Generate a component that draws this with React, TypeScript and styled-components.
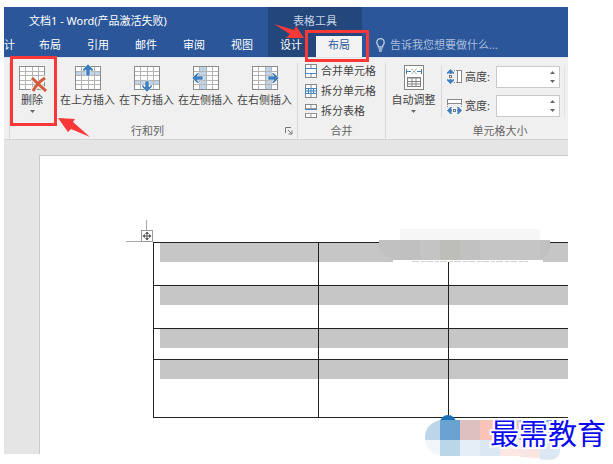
import React from "react";
import styled, { createGlobalStyle } from "styled-components";

const GlobalStyle = createGlobalStyle`
  * { box-sizing: border-box; }
  body {
    margin: 0;
    background: #fff;
    font-family: "Noto Sans", "Noto Sans CJK SC", sans-serif;
    font-size: 11px;
    line-height: 16px;
    color: #444;
  }
  button, input { font: inherit; color: inherit; }
`;

const Screen = styled.main`
  position: relative;
  display: flex;
  min-height: 100vh;
  padding: 7px 45px 10px 4px;
  overflow: hidden;
`;

const Window = styled.section`
  flex: 1;
  min-width: 0;
  display: flex;
  flex-direction: column;
  overflow: hidden;
  background: #e5e5e5;
`;

const Header = styled.header`
  display: flex;
  height: 50px;
  background: #2b579a;
  color: #fff;
`;

const HeaderColumn = styled.div<{ $dark?: boolean; $width?: number }>`
  flex: ${(p) => (p.$width ? `0 0 ${p.$width}px` : "1")};
  min-width: 0;
  display: grid;
  grid-template-columns: minmax(0, 1fr);
  grid-template-rows: 26px 24px;
  overflow: hidden;
  background: ${(p) => (p.$dark ? "#24477b" : "transparent")};
`;

const Title = styled.h1`
  margin: 0;
  padding: 6px 0 0 25px;
  font-size: 11px;
  font-weight: 400;
  line-height: 16px;
  white-space: nowrap;
`;

const ContextTitle = styled.div`
  padding-top: 6px;
  text-align: center;
  color: #c5d2e6;
`;

const TabRow = styled.nav`
  display: flex;
  justify-content: space-between;
  align-items: flex-end;
`;

const Tab = styled.button<{ $active?: boolean; $width?: number }>`
  flex: 0 0 ${(p) => p.$width ?? 48}px;
  height: 21px;
  padding: 0 0 3px;
  border: 0;
  line-height: 18px;
  white-space: nowrap;
  background: ${(p) => (p.$active ? "#f3f3f3" : "transparent")};
  color: ${(p) => (p.$active ? "#2b579a" : "#fff")};
`;

const MainTabRow = styled(TabRow)`
  justify-content: flex-start;

  ${Tab}:first-child {
    text-align: left;
  }
`;

const TellMe = styled.button`
  grid-row: 2;
  display: flex;
  align-items: center;
  gap: 5px;
  padding: 0 0 0 14px;
  border: 0;
  background: transparent;
  color: #a9bddb;
  white-space: nowrap;
`;

const Ribbon = styled.div`
  display: flex;
  height: 83px;
  padding: 5px 0 0 5px;
  overflow: hidden;
  background: #f0f0f0;
  border-top: 1px solid #dfe5ee;
  border-bottom: 1px solid #d4d4d4;
`;

const Group = styled.section<{ $width: number }>`
  flex: 0 0 ${(p) => p.$width}px;
  display: grid;
  grid-template-rows: minmax(0, 1fr) 16px;
  border-left: 1px solid #d8d8d8;
`;

const GroupBody = styled.div`
  display: flex;
`;

const GroupFooter = styled.div<{ $launcher?: boolean }>`
  display: grid;
  grid-template-columns: ${(p) => (p.$launcher ? "1fr 12px" : "1fr")};
  align-items: center;
  text-align: center;
  color: #666;
`;

const Launcher = styled.button`
  display: flex;
  padding: 0;
  border: 0;
  background: none;
`;

const BigButton = styled.button<{ $width: number }>`
  flex: 0 0 ${(p) => p.$width}px;
  display: flex;
  flex-direction: column;
  align-items: center;
  padding: 1px 0 0;
  border: 0;
  background: none;
  white-space: nowrap;
`;

const InsertButtons = styled.div`
  display: flex;
  padding-left: 4px;
`;

const ButtonLabel = styled.span`
  line-height: 16px;
`;

const Stack = styled.div`
  display: flex;
  flex-direction: column;
  margin-top: -2px;
  padding-left: 7px;
`;

const SmallButton = styled.button`
  display: flex;
  align-items: center;
  gap: 4px;
  height: 20px;
  padding: 0;
  border: 0;
  background: none;
  white-space: nowrap;
`;

const Fields = styled.div`
  display: flex;
  flex-direction: column;
  gap: 7px;
  height: 51px;
  margin-top: 3px;
  padding-left: 5px;
  border-left: 1px solid #d8d8d8;
`;

const FieldRow = styled.label`
  display: grid;
  grid-template-columns: 18px 31px 64px;
  align-items: center;
  height: 22px;
`;

const Divider = styled.span`
  height: 51px;
  margin: 3px 0 0 4px;
  border-left: 1px solid #e2e2e2;
`;

const Spin = styled.span`
  display: flex;
  align-items: center;
  height: 22px;
  padding-right: 4px;
  background: #fff;
  border: 1px solid #c9c9c9;
`;

const SpinInput = styled.input`
  flex: 1;
  min-width: 0;
  height: 18px;
  padding: 0 2px;
  border: 0;
  outline: 0;
  background: transparent;
`;

const Canvas = styled.div`
  flex: 1;
  display: flex;
  padding: 15px 0 0 35px;
`;

const Paper = styled.article`
  flex: 1;
  min-width: 0;
  padding: 86px 0 0 113px;
  background: #fff;
  border-top: 1px solid #cacaca;
  border-left: 1px solid #cacaca;
`;

const DocTable = styled.table`
  width: 100%;
  table-layout: fixed;
  border-collapse: collapse;
  border-left: 1px solid #555;
`;

const Cell = styled.td<{ $height: number }>`
  height: ${(p) => p.$height}px;
  padding: 0;
  vertical-align: top;
  border: 1px solid #222;
  border-right: 0;
`;

const Selection = styled.div<{ $first: boolean }>`
  height: 19px;
  margin-left: ${(p) => (p.$first ? 6 : 0)}px;
  background: #c6c6c6;
`;

const Overlay = styled.svg`
  position: absolute;
  left: 0;
  top: 0;
  pointer-events: none;
`;

const Brand = styled.div`
  position: absolute;
  left: 490px;
  top: 413px;
  font-family: "Noto Sans CJK SC", sans-serif;
  font-size: 29px;
  line-height: 38px;
  color: #0a0af0;
  white-space: nowrap;
  text-shadow: 2px 0 #fff, -2px 0 #fff, 0 2px #fff, 0 -2px #fff,
    2px 2px #fff, -2px -2px #fff, 2px -2px #fff, -2px 2px #fff;
`;

type GridKind = "delete" | "above" | "below" | "left" | "right";

const GridIcon = ({ kind }: { kind: GridKind }) => (
  <svg width="30" height="28" viewBox="0 0 30 28">
    <rect x="2.5" y="2.5" width="25" height="23" fill="#fff" />
    {kind === "above" && <rect x="3" y="7" width="24" height="4" fill="#bfd3e8" />}
    {kind === "below" && <rect x="3" y="16" width="24" height="5" fill="#bfd3e8" />}
    {kind === "left" && <rect x="9" y="3" width="6" height="22" fill="#bfd3e8" />}
    {kind === "right" && <rect x="15" y="3" width="7" height="22" fill="#bfd3e8" />}
    <path
      d="M3 7.5H27M3 11.5H27M3 16.5H27M3 20.5H27M8.5 3V25M15.5 3V25M21.5 3V25"
      stroke="#b4b4b4"
      fill="none"
    />
    <rect x="2.5" y="2.5" width="25" height="23" fill="none" stroke="#8c8c8c" />
    {kind === "delete" && (
      <>
        <path d="M15 14L29 27M29 13L15 27" stroke="#f0f0f0" strokeWidth="5" />
        <path d="M15 14Q21 20 29 27M28 14Q20 19 16 27" stroke="#d35a3a" strokeWidth="3" fill="none" />
      </>
    )}
    {kind === "above" && (
      <path d="M15 0L20 5V8L17 6V12H13V6L10 8V5Z" fill="#3f7fbd" stroke="#fff" strokeWidth=".5" />
    )}
    {kind === "below" && (
      <path d="M13 17H17V23L20 20V23L15 28L10 23V20L13 23Z" fill="#3f7fbd" stroke="#fff" strokeWidth=".5" />
    )}
    {kind === "left" && (
      <path d="M1 14L6 9H9L6 12H12V16H6L9 19H6Z" fill="#3f7fbd" stroke="#fff" strokeWidth=".5" />
    )}
    {kind === "right" && (
      <path d="M29 14L24 9H21L24 12H18V16H24L21 19H24Z" fill="#3f7fbd" stroke="#fff" strokeWidth=".5" />
    )}
  </svg>
);

type MergeKind = "merge" | "splitCell" | "splitTable";

const MergeIcon = ({ kind }: { kind: MergeKind }) => (
  <svg width="12" height="14" viewBox="0 0 12 14">
    <rect x=".5" y=".5" width="11" height="13" fill="#fff" stroke="#888" />
    {kind !== "splitTable" ? (
      <>
        <path d="M6 1V4M6 10V13" stroke="#888" />
        <rect x=".5" y="4.5" width="11" height="5" fill="#fff" stroke="#4a86bf" />
        {kind === "splitCell" && (
          <path d="M1 7H11M3.5 5V9M6 5V9M8.5 5V9" stroke="#3f7fbd" />
        )}
      </>
    ) : (
      <>
        <path d="M6 1V13M1 4.5H11M1 9.5H11" stroke="#999" />
        <rect x="0" y="5" width="12" height="4" fill="#f0f0f0" />
        <path d="M0 5.5H12" stroke="#4a86bf" />
      </>
    )}
  </svg>
);

const AutoFitIcon = () => (
  <svg width="22" height="28" viewBox="0 0 22 28">
    <rect x="1.5" y="1.5" width="19" height="24" fill="#fff" stroke="#858585" />
    <path d="M3.5 5V10M18.5 5V10M4 7.5H8M14 7.5H18" stroke="#3f7fbd" />
    <path d="M8.5 5L13.5 10M13.5 5L8.5 10" stroke="#777" strokeDasharray="2 1" />
    <rect x="4.5" y="13.5" width="13" height="9" fill="#fff" stroke="#808080" />
    <path d="M4 14H18M5 17.5H17M5 20H17M9 14V22M13 14V22" stroke="#858585" />
  </svg>
);

const HeightIcon = () => (
  <svg width="16" height="16" viewBox="0 0 16 16">
    <path d="M3.5 0L7 3.500V5L4.500 4V5H2.500V4L0 5V3.500ZM3.500 15L7 11.500V10L4.500 11V10H2.500V11L0 10V11.500Z" fill="#3f7fbd" />
    <rect x="2.5" y="6.5" width="2" height="2" fill="#fff" stroke="#777" />
    <path d="M7 1.5H10M7 13.5H10" stroke="#888" strokeDasharray="1 1" />
    <rect x="10.5" y="1.5" width="4" height="12" fill="#fff" stroke="#888" />
  </svg>
);

const WidthIcon = () => (
  <svg width="16" height="16" viewBox="0 0 16 16">
    <rect x=".5" y="1.5" width="14" height="4" fill="#fff" stroke="#888" />
    <path d="M.5 6V9M14.5 6V9" stroke="#888" strokeDasharray="1 1" />
    <path d="M0 12.500L3.500 9H5L4 11.500H5V13.500H4L5 16H3.500ZM15 12.500L11.500 9H10L11 11.500H10V13.500H11L10 16H11.500Z" fill="#3f7fbd" />
    <rect x="6.5" y="11.5" width="2" height="2" fill="#fff" stroke="#777" />
  </svg>
);

const DownArrow = () => (
  <svg width="5" height="6" viewBox="0 0 5 6">
    <path d="M0 2H5L2.5 5Z" fill="#666" />
  </svg>
);

const SpinArrows = () => (
  <svg width="5" height="14" viewBox="0 0 5 14">
    <path d="M0 4H5L2.5 1ZM0 10H5L2.5 13Z" fill="#666" />
  </svg>
);

const Bulb = () => (
  <svg width="9" height="14" viewBox="0 0 9 14" fill="none" stroke="#b8c8e0" strokeWidth="1.4">
    <path d="M2.5 9C2.5 7 .8 6.5 .8 4.3A3.7 3.7 0 0 1 8.2 4.3C8.2 6.5 6.5 7 6.5 9ZM2.5 11H6.5M3 13H6" />
  </svg>
);

const mainTabs = ["布局", "引用", "邮件", "审阅", "视图"];

const insertButtons: { kind: GridKind; label: string }[] = [
  { kind: "above", label: "在上方插入" },
  { kind: "below", label: "在下方插入" },
  { kind: "left", label: "在左侧插入" },
  { kind: "right", label: "在右侧插入" },
];

const mergeButtons: { kind: MergeKind; label: string }[] = [
  { kind: "merge", label: "合并单元格" },
  { kind: "splitCell", label: "拆分单元格" },
  { kind: "splitTable", label: "拆分表格" },
];

const rowHeights = [43, 43, 31, 58];

const mosaic: [number, number, number, number, string][] = [
  [425, 420, 15, 20, "#bdd5e9"],
  [440, 420, 20, 20, "#68a3d0"],
  [460, 420, 20, 20, "#dfc0c1"],
  [480, 420, 20, 20, "#f9c3b7"],
  [500, 420, 20, 20, "#dfc8cc"],
  [520, 420, 20, 20, "#8bb3d5"],
  [540, 420, 20, 20, "#7dacd5"],
  [425, 440, 15, 16, "#f1f6fa"],
  [440, 440, 20, 16, "#bcd6e9"],
  [460, 440, 20, 16, "#e5eef7"],
  [480, 440, 20, 16, "#dbe7f2"],
  [500, 440, 20, 16, "#fce7e3"],
  [520, 440, 20, 18, "#f9e5e1"],
  [540, 440, 20, 20, "#dbe7f2"],
];

export default function App() {
  return (
    <Screen>
      <GlobalStyle />
      <Window>
        <Header>
          <HeaderColumn $width={264}>
            <Title>文档1 - Word(产品激活失败)</Title>
            <MainTabRow>
              <Tab $width={22}>计</Tab>
              {mainTabs.map((t) => (
                <Tab key={t}>{t}</Tab>
              ))}
            </MainTabRow>
          </HeaderColumn>
          <HeaderColumn $width={94} $dark>
            <ContextTitle>表格工具</ContextTitle>
            <TabRow>
              <Tab $width={46}>设计</Tab>
              <Tab $width={46} $active>布局</Tab>
            </TabRow>
          </HeaderColumn>
          <HeaderColumn>
            <TellMe>
              <Bulb />
              告诉我您想要做什么...
            </TellMe>
          </HeaderColumn>
        </Header>

        <Ribbon>
          <Group $width={288}>
            <GroupBody>
              <BigButton $width={44}>
                <GridIcon kind="delete" />
                <ButtonLabel>删除</ButtonLabel>
                <DownArrow />
              </BigButton>
              <InsertButtons>
                {insertButtons.map((b) => (
                  <BigButton key={b.kind} $width={59}>
                    <GridIcon kind={b.kind} />
                    <ButtonLabel>{b.label}</ButtonLabel>
                  </BigButton>
                ))}
              </InsertButtons>
            </GroupBody>
            <GroupFooter $launcher>
              <span>行和列</span>
              <Launcher aria-label="行和列">
                <svg width="8" height="8" viewBox="0 0 8 8" fill="none" stroke="#777">
                  <path d="M.5 6V.5H6M3 3L6.5 6.5M7 3.5V7H3.5" />
                </svg>
              </Launcher>
            </GroupFooter>
          </Group>

          <Group $width={88}>
            <Stack>
              {mergeButtons.map((b) => (
                <SmallButton key={b.kind}>
                  <MergeIcon kind={b.kind} />
                  {b.label}
                </SmallButton>
              ))}
            </Stack>
            <GroupFooter>
              <span>合并</span>
            </GroupFooter>
          </Group>

          <Group $width={229}>
            <GroupBody>
              <BigButton $width={55}>
                <AutoFitIcon />
                <ButtonLabel>自动调整</ButtonLabel>
                <DownArrow />
              </BigButton>
              <Fields>
                <FieldRow>
                  <HeightIcon />
                  <span>高度:</span>
                  <Spin>
                    <SpinInput />
                    <SpinArrows />
                  </Spin>
                </FieldRow>
                <FieldRow>
                  <WidthIcon />
                  <span>宽度:</span>
                  <Spin>
                    <SpinInput />
                    <SpinArrows />
                  </Spin>
                </FieldRow>
              </Fields>
              <Divider />
            </GroupBody>
            <GroupFooter>
              <span>单元格大小</span>
            </GroupFooter>
          </Group>
        </Ribbon>

        <Canvas>
          <Paper>
            <DocTable>
              <colgroup>
                <col width="165" />
                <col width="130" />
                <col />
              </colgroup>
              <tbody>
                {rowHeights.map((h, row) => (
                  <tr key={row}>
                    {[0, 1, 2].map((col) => (
                      <Cell key={col} $height={h}>
                        <Selection $first={col === 0} />
                      </Cell>
                    ))}
                  </tr>
                ))}
              </tbody>
            </DocTable>
          </Paper>
        </Canvas>
      </Window>

      <Overlay width="613" height="464" viewBox="0 0 613 464">
        <path d="M146.500 220V230M126 241.500H153" stroke="#aaa" />
        <rect x="141.500" y="230.500" width="11" height="11" fill="#fff" stroke="#999" />
        <path d="M147 232V240M143 236H151" stroke="#555" />
        <path d="M147 231.500L149 234H145ZM147 240.500L149 238H145ZM142.500 236L145 234V238ZM151.500 236L149 234V238Z" fill="#555" />

        <rect x="400" y="229" width="140" height="11" fill="#f6f6f6" />
        <path d="M379 240H550V246Q550 255 541 260H393Q380 255 379 246Z" fill="#c1c1c1" />
        <rect x="400" y="240" width="20" height="20" fill="#c0c0c0" />
        <rect x="420" y="240" width="20" height="20" fill="#c4c4c4" />
        <rect x="440" y="240" width="20" height="20" fill="#bdbdba" />
        <rect x="480" y="240" width="60" height="20" fill="#c5c5c5" />
        <rect x="393" y="260" width="150" height="2" fill="#fff" />
        <path d="M412 261.500H528" stroke="#d2d2d2" strokeDasharray="7 2 4 1" />

        <circle cx="448" cy="423" r="8" fill="#1c6fb8" />
        <clipPath id="cloud">
          <path d="M440 420H560V452Q558 460 549 460Q541 460 535 458Q520 457 510 456H440Q425 452 425 438Q425 424 440 420Z" />
        </clipPath>
        <g clipPath="url(#cloud)">
          {mosaic.map(([x, y, w, h, c]) => (
            <rect key={`${x}-${y}`} x={x} y={y} width={w} height={h} fill={c} />
          ))}
        </g>

        <g fill="none" stroke="#fb3838" strokeWidth="3">
          <rect x="11.500" y="57.500" width="44" height="67" />
          <rect x="306.500" y="31.500" width="61" height="29" />
        </g>
        <g fill="#fb3838">
          <path d="M58 118L75 119L73 122L90 137L71 129L68 132Z" />
          <path d="M274 24L294 30L296 26L304 38L286 38L290 34Z" />
        </g>
      </Overlay>
      <Brand>最需教育</Brand>
    </Screen>
  );
}
